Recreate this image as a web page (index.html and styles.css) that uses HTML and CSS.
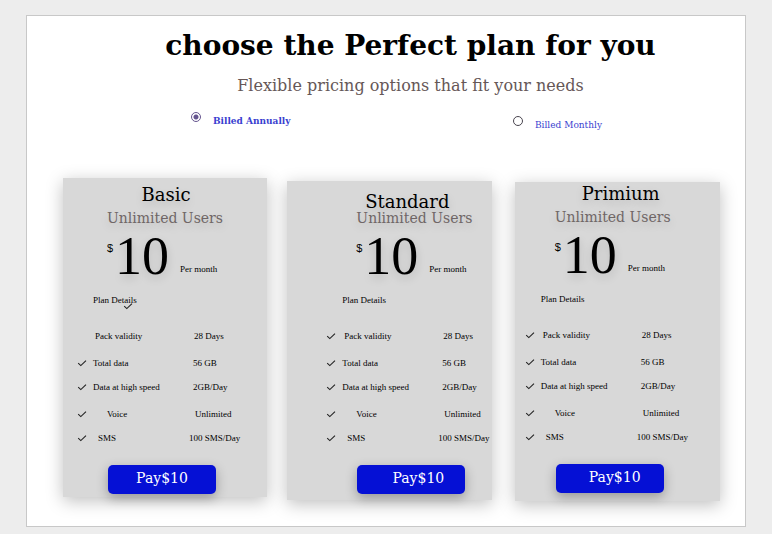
FILE: index.html
```html
<!DOCTYPE html>
<html lang="en">
<head>
<meta charset="utf-8">
<meta name="viewport" content="width=device-width, initial-scale=1">
<title>Pricing plans</title>
<link rel="stylesheet" href="styles.css">
</head>
<body>
<svg class="defs" aria-hidden="true"><symbol id="check" viewBox="0 0 10 8"><path d="M1.2 4.2 3.8 6.6 9 1.6" fill="none" stroke="currentColor" stroke-width="1.1"/></symbol></svg>
<main class="sheet">
  <header class="intro">
    <h1>choose the Perfect plan for you</h1>
    <p>Flexible pricing options that fit your needs</p>
  </header>
  <form class="billing">
    <div class="choice annual"><input type="radio" name="billing" id="annual" checked><label for="annual">Billed Annually</label></div>
    <div class="choice monthly"><input type="radio" name="billing" id="monthly"><label for="monthly">Billed Monthly</label></div>
  </form>
  <div class="plans">
    <section class="card basic">
      <h2>Basic</h2>
      <p class="users">Unlimited Users</p>
      <p class="price"><span class="currency">$</span><span class="amount">10</span><span class="period">Per month</span></p>
      <h3>Plan Details<svg class="check"><use href="#check"/></svg></h3>
      <ul>
        <li class="validity"><span></span><span>Pack validity</span><span>28 Days</span></li>
        <li><svg class="check"><use href="#check"/></svg><span>Total data</span><span>56 GB</span></li>
        <li><svg class="check"><use href="#check"/></svg><span>Data at high speed</span><span>2GB/Day</span></li>
        <li class="voice"><svg class="check"><use href="#check"/></svg><span>Voice</span><span>Unlimited</span></li>
        <li class="sms"><svg class="check"><use href="#check"/></svg><span>SMS</span><span>100 SMS/Day</span></li>
      </ul>
      <button type="button">Pay$10</button>
    </section>
    <section class="card standard">
      <h2>Standard</h2>
      <p class="users">Unlimited Users</p>
      <p class="price"><span class="currency">$</span><span class="amount">10</span><span class="period">Per month</span></p>
      <h3>Plan Details</h3>
      <ul>
        <li class="validity"><svg class="check"><use href="#check"/></svg><span>Pack validity</span><span>28 Days</span></li>
        <li><svg class="check"><use href="#check"/></svg><span>Total data</span><span>56 GB</span></li>
        <li><svg class="check"><use href="#check"/></svg><span>Data at high speed</span><span>2GB/Day</span></li>
        <li class="voice"><svg class="check"><use href="#check"/></svg><span>Voice</span><span>Unlimited</span></li>
        <li class="sms"><svg class="check"><use href="#check"/></svg><span>SMS</span><span>100 SMS/Day</span></li>
      </ul>
      <button type="button">Pay$10</button>
    </section>
    <section class="card premium">
      <h2>Primium</h2>
      <p class="users">Unlimited Users</p>
      <p class="price"><span class="currency">$</span><span class="amount">10</span><span class="period">Per month</span></p>
      <h3>Plan Details</h3>
      <ul>
        <li class="validity"><svg class="check"><use href="#check"/></svg><span>Pack validity</span><span>28 Days</span></li>
        <li><svg class="check"><use href="#check"/></svg><span>Total data</span><span>56 GB</span></li>
        <li><svg class="check"><use href="#check"/></svg><span>Data at high speed</span><span>2GB/Day</span></li>
        <li class="voice"><svg class="check"><use href="#check"/></svg><span>Voice</span><span>Unlimited</span></li>
        <li class="sms"><svg class="check"><use href="#check"/></svg><span>SMS</span><span>100 SMS/Day</span></li>
      </ul>
      <button type="button">Pay$10</button>
    </section>
  </div>
</main>
</body>
</html>
```
FILE: styles.css
```css
* { box-sizing: border-box; }
body {
  margin: 0;
  padding: 15px 26px 7px;
  background: #ededed;
  color: #000;
  font-family: "DejaVu Serif", serif;
}
h1, h2, h3, p, ul { margin: 0; padding: 0; }
.defs { position: absolute; width: 0; height: 0; }

.sheet {
  background: #fff;
  border: 1px solid #c8c8c8;
  padding: 14px 25px 25px 36px;
}

.intro { text-align: center; padding-left: 38px; }
.intro h1 { font-size: 28px; line-height: 32px; }
.intro p { margin-top: 12px; font-size: 16px; line-height: 24px; color: #665757; }

.billing {
  display: grid;
  grid-template-columns: 322fr 207fr;
  align-items: start;
  padding: 14px 0 0 128px;
  height: 80px;
}
.choice {
  display: flex;
  color: #3a3fd0;
  font-family: "DejaVu Serif Condensed", "DejaVu Serif", serif;
  font-size: 10px;
  line-height: 12px;
}
.choice input {
  appearance: none;
  width: 10px;
  height: 10px;
  margin: 0;
  border: 1px solid #49454f;
  border-radius: 50%;
}
.choice input:checked {
  border-color: #65558f;
  background: radial-gradient(circle, #65558f 2px, transparent 3px);
}
.choice label { padding-top: 3px; margin-left: 12px; }
.annual { font-weight: bold; }
.monthly { padding-top: 4px; }

.plans {
  display: grid;
  grid-template-columns: 51fr 51fr 52fr;
  gap: 20px;
  align-items: start;
}
.card {
  background: #d8d8d8;
  box-shadow: 0 4px 16px rgba(0, 0, 0, .25);
}
.basic { padding: 9px 0 3px 14px; }
.standard { margin-top: 3px; padding: 13px 0 6px 39px; }
.premium { margin: 4px 0 0 3px; padding: 4px 0 8px 10px; }

.card h2 {
  width: 178px;
  text-align: center;
  font-size: 18px;
  font-weight: normal;
  line-height: 16px;
  text-shadow: 0 4px 10px rgba(0, 0, 0, .15);
}
.standard h2 { width: 162px; }
.premium h2 { width: 192px; }
.users {
  margin: 7px 0 5px 30px;
  font-size: 14px;
  line-height: 16px;
  color: #6f6666;
  text-shadow: 0 4px 10px rgba(0, 0, 0, .15);
}
.standard .users { margin-top: 0; }
.price { display: flex; height: 48px; margin-left: 30px; }
.currency { width: 8px; padding-top: 10px; font: 11px/14px "Liberation Sans", sans-serif; }
.amount {
  width: 65px;
  font: 54px/50px "Liberation Serif", serif;
  text-shadow: 0 4px 10px rgba(0, 0, 0, .15);
}
.period { padding-top: 32px; font: 9px/12px "Liberation Serif", serif; }
.card h3 {
  position: relative;
  margin: 15px 0 24px 16px;
  font: 9px/12px "Liberation Serif", serif;
}
.check { width: 10px; height: 8px; color: #222; }
h3 .check { position: absolute; left: 30px; top: 8px; }

.card ul { list-style: none; font: 9px/12px "Liberation Serif", serif; }
.card li { display: grid; grid-template-columns: 16px 100px 1fr; align-items: center; }
.card li + li { margin-top: 15px; }
.card li:nth-child(odd) { margin-top: 12px; }
.card .validity { grid-template-columns: 18px 99px 1fr; }
.card .voice { grid-template-columns: 30px 88px 1fr; }
.card .sms { grid-template-columns: 21px 91px 1fr; }

.card button {
  display: block;
  width: 108px;
  height: 29px;
  margin: 21px 0 0 31px;
  padding: 0 0 2px;
  border: 0;
  border-radius: 5px;
  background: #0510d5;
  box-shadow: 0 4px 12px rgba(0, 0, 0, .3);
  color: #fff;
  font: 14px/27px "DejaVu Serif", serif;
}
.standard button { padding-left: 14px; }
.premium button { padding-left: 10px; }
```
